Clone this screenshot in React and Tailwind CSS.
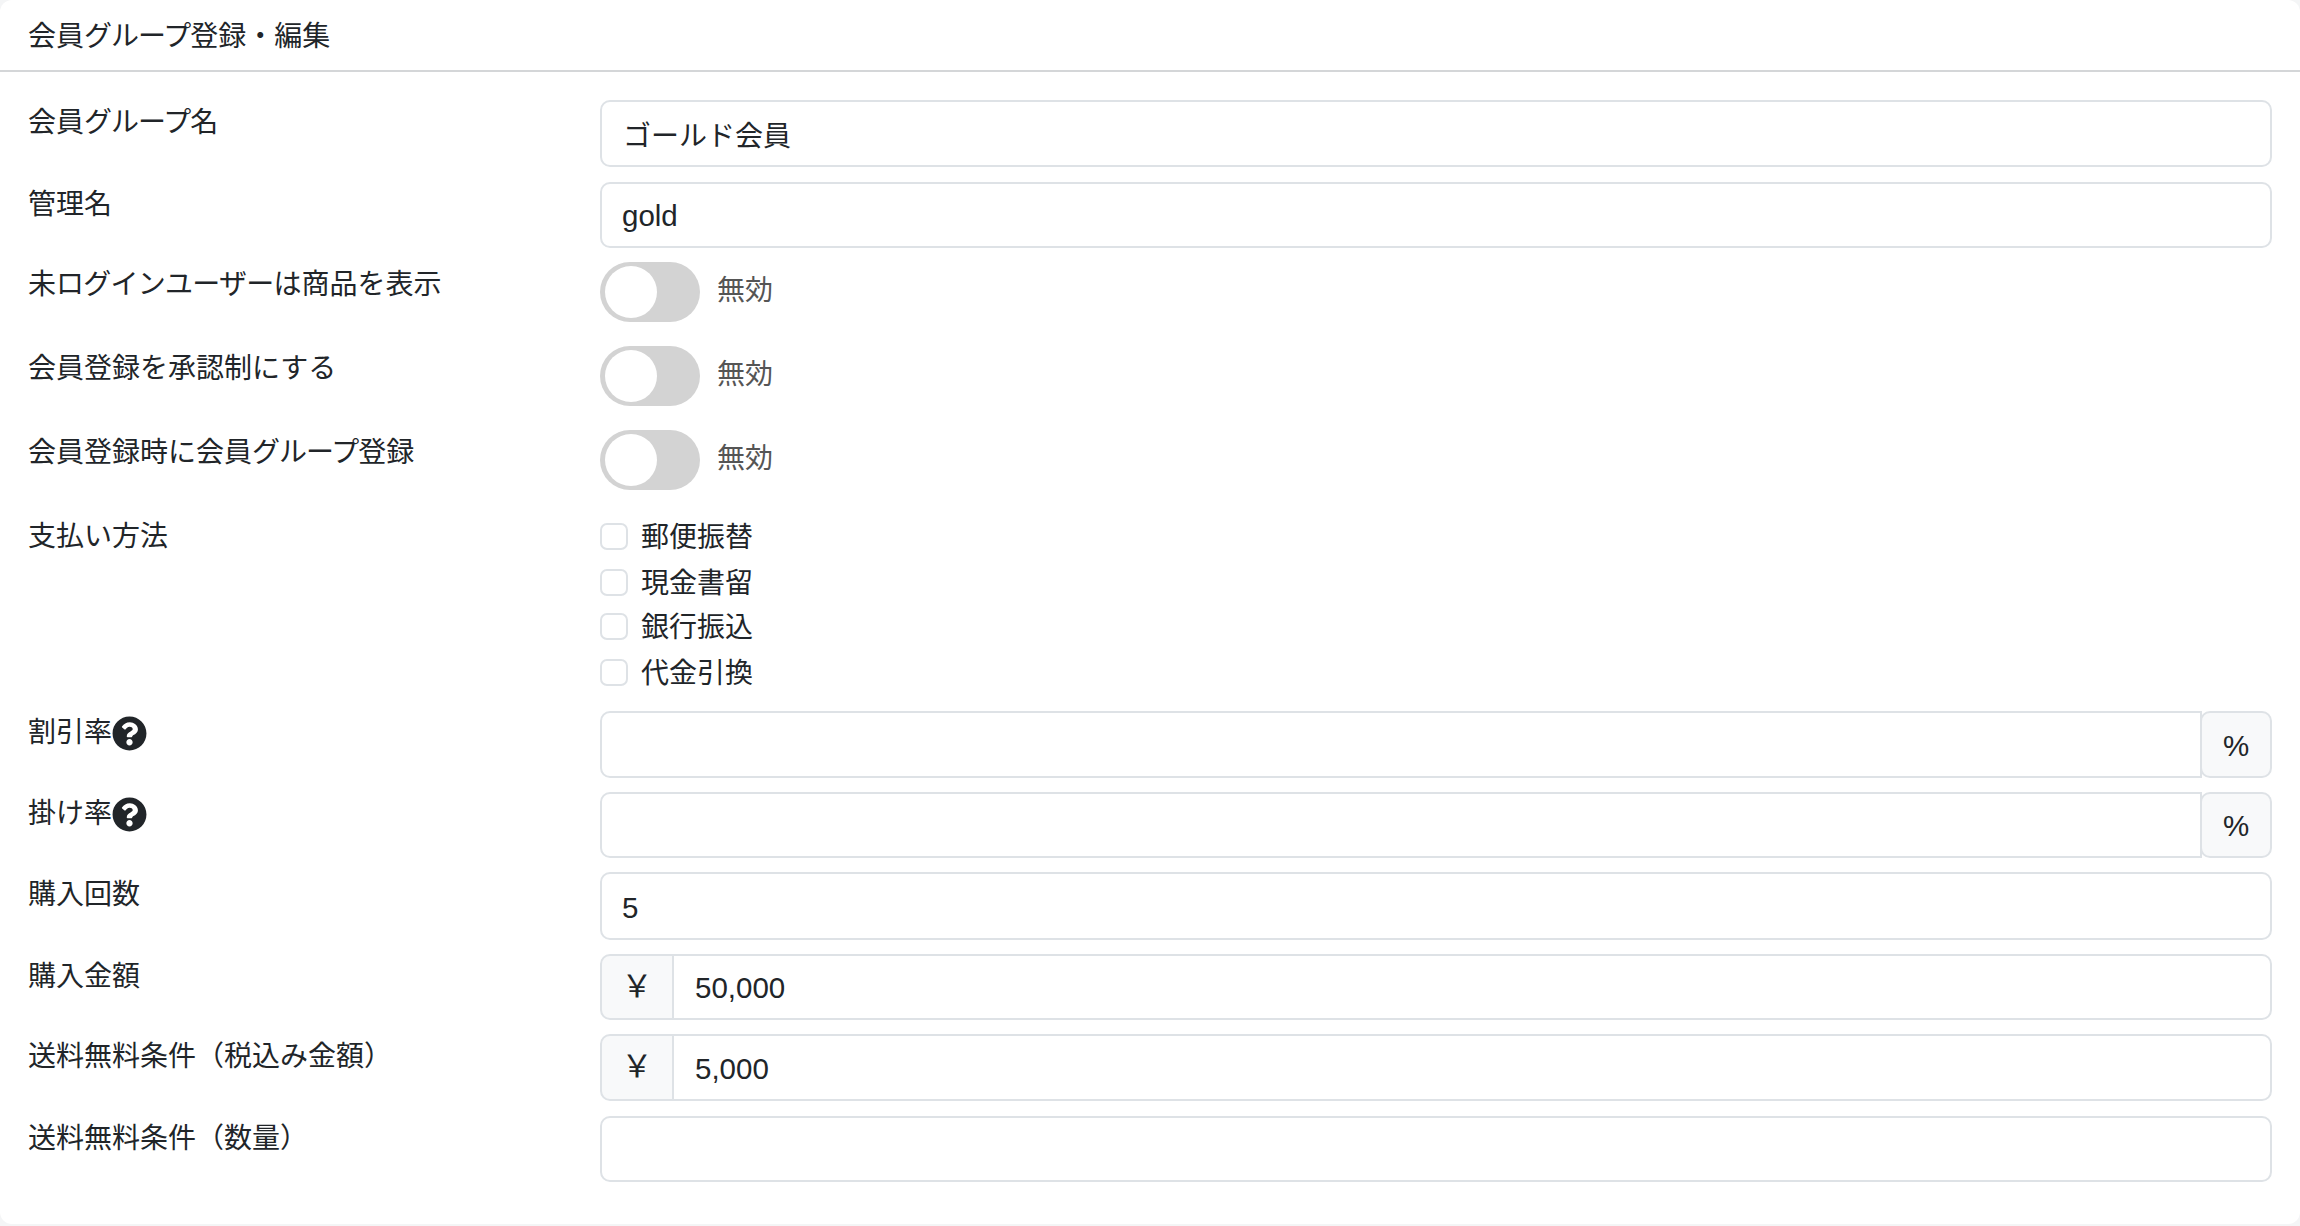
import React from "react";
import { FaQuestionCircle } from "react-icons/fa";

function Row({ label, help, className = "mb-[14px]", labelClass = "h-[45px] leading-[45px]", children }) {
  return (
    <div className={`flex ${className}`}>
      <label className={`w-[572px] shrink-0 flex items-center whitespace-nowrap ${labelClass}`}>
        {label}
        {help && <FaQuestionCircle className="w-[35px] h-[35px] text-[#212529] mt-[2px]" />}
      </label>
      <div className="flex-1 min-w-0">{children}</div>
    </div>
  );
}

function TextInput({ value = "", className = "h-[66px] pt-[2px]" }) {
  return (
    <input
      type="text"
      defaultValue={value}
      className={`w-full px-[20px] border-2 border-[#dee2e6] rounded-[10px] bg-white text-[#212529] outline-none ${className}`}
    />
  );
}

function Toggle() {
  return (
    <div className="flex items-center h-[60px]">
      <div className="w-[100px] h-[60px] rounded-full bg-[#d3d3d3] flex items-center pl-[5px]">
        <div className="w-[52px] h-[52px] rounded-full bg-white" />
      </div>
      <span className="ml-[17px] text-[#555555] mt-[-3px]">無効</span>
    </div>
  );
}

function Percent({ h = "h-[66px]" }) {
  return (
    <div className={`flex ${h}`}>
      <input
        type="text"
        className="flex-1 min-w-0 px-[20px] border-2 border-[#dee2e6] rounded-l-[10px] bg-white outline-none"
      />
      <div className="w-[72px] -ml-[2px] pt-[3px] text-[29.5px] flex items-center justify-center bg-[#f8f9fa] border-2 border-[#dee2e6] rounded-[10px]">
        %
      </div>
    </div>
  );
}

function Yen({ value, h = "h-[66px] pt-0" }) {
  return (
    <div className={`flex ${h}`}>
      <div className="w-[74px] text-[31px] flex items-center justify-center bg-[#f8f9fa] border-2 border-[#dee2e6] rounded-l-[10px]">
        ￥
      </div>
      <input
        type="text"
        defaultValue={value}
        className="flex-1 min-w-0 -ml-[2px] pl-[21px] pr-[20px] pt-[3px] text-[29.5px] border-2 border-[#dee2e6] rounded-r-[10px] bg-white text-[#212529] outline-none"
      />
    </div>
  );
}

const Group = () => <span className="tracking-[-1px]">グループ</span>;

const methods = ["郵便振替", "現金書留", "銀行振込", "代金引換"];

export default function App() {
  return (
    <div className="min-h-screen bg-[#f4f5f6] font-['Liberation_Sans','Noto_Sans_CJK_JP',sans-serif] text-[28px] text-[#212529]">
      <div className="h-[1224px] bg-white rounded-[12px] overflow-hidden">
        <div className="h-[72px] flex items-center px-[28px] pt-[4px] border-b-2 border-[#d4d6d8]">
          <span>会員<Group />登録・編集</span>
        </div>
        <div className="pt-[28px] pl-[28px] pr-[28px]">
          <Row label={<span>会員<Group />名</span>} className="mb-[15px]">
            <TextInput value="ゴールド会員" className="h-[67px] pt-[1px] pl-[21px]" />
          </Row>
          <Row label="管理名">
            <TextInput value="gold" className="h-[66px] pt-[2px] text-[29.5px]" />
          </Row>
          <Row label={<span>未<span className="tracking-[-0.75px]">ログインユーザー</span>は商品を表示</span>} className="mb-[24px]"><Toggle /></Row>
          <Row label="会員登録を承認制にする" className="mb-[24px]"><Toggle /></Row>
          <Row label={<span>会員登録時に会員<Group />登録</span>} className="mb-[23px]"><Toggle /></Row>
          <Row label="支払い方法" className="mb-[15px]" labelClass="h-[47px] leading-[47px]">
            <div className="flex flex-col">
              {methods.map((m, i) => (
                <label key={m} className={i === 2 ? "flex items-center h-[46px] -mt-[2px]" : i === 3 ? "flex items-center h-[47px]" : "flex items-center h-[46px]"}>
                  <span className="w-[28px] h-[27px] border-2 border-[#dee2e6] rounded-[7px] bg-white" />
                  <span className="ml-[13px] pt-[3px]">{m}</span>
                </label>
              ))}
            </div>
          </Row>
          <Row label="割引率" help labelClass="h-[43px] leading-[43px]"><Percent h="h-[67px]" /></Row>
          <Row label="掛け率" help labelClass="h-[43px] leading-[43px]"><Percent /></Row>
          <Row label="購入回数">
            <TextInput value="5" className="h-[68px] pt-[4px] text-[29.5px]" />
          </Row>
          <Row label="購入金額"><Yen value="50,000" /></Row>
          <Row label="送料無料条件（税込み金額）" className="mb-[15px]"><Yen value="5,000" h="h-[67px]" /></Row>
          <Row label="送料無料条件（数量）"><TextInput /></Row>
        </div>
      </div>
    </div>
  );
}
